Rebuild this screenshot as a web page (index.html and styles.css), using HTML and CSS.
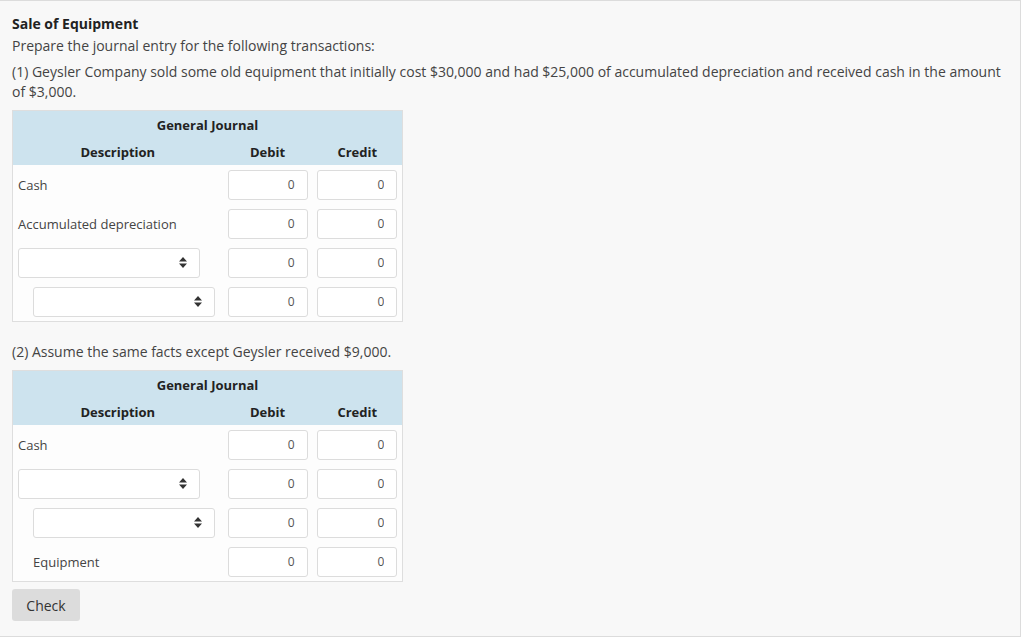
FILE: index.html
```html
<!DOCTYPE html>
<html>
<head>
<meta charset="utf-8">
<link rel="stylesheet" href="styles.css">
</head>
<body>
<div class="panel">
  <div class="title">Sale of Equipment</div>
  <div class="lead">Prepare the journal entry for the following transactions:</div>
  <p class="q">(1) Geysler Company sold some old equipment that initially cost $30,000 and had $25,000 of accumulated depreciation and received cash in the amount of $3,000.</p>
  <table class="gj">
    <colgroup><col class="c-desc"><col class="c-amt"><col class="c-amt"></colgroup>
    <thead>
      <tr><th colspan="3" class="cap">General Journal</th></tr>
      <tr><th>Description</th><th>Debit</th><th>Credit</th></tr>
    </thead>
    <tbody>
      <tr><td class="desc">Cash</td><td class="amt"><input class="num" value="0"></td><td class="amt"><input class="num" value="0"></td></tr>
      <tr><td class="desc">Accumulated depreciation</td><td class="amt"><input class="num" value="0"></td><td class="amt"><input class="num" value="0"></td></tr>
      <tr><td class="desc"><div class="sel"><svg width="8" height="11" viewBox="0 0 8 11"><path d="M4 0 L8 4.5 H0 Z M0 6.5 H8 L4 11 Z" fill="#333"/></svg></div></td><td class="amt"><input class="num" value="0"></td><td class="amt"><input class="num" value="0"></td></tr>
      <tr><td class="desc ind"><div class="sel"><svg width="8" height="11" viewBox="0 0 8 11"><path d="M4 0 L8 4.5 H0 Z M0 6.5 H8 L4 11 Z" fill="#333"/></svg></div></td><td class="amt"><input class="num" value="0"></td><td class="amt"><input class="num" value="0"></td></tr>
    </tbody>
  </table>
  <p class="q q2">(2) Assume the same facts except Geysler received $9,000.</p>
  <table class="gj">
    <colgroup><col class="c-desc"><col class="c-amt"><col class="c-amt"></colgroup>
    <thead>
      <tr><th colspan="3" class="cap">General Journal</th></tr>
      <tr><th>Description</th><th>Debit</th><th>Credit</th></tr>
    </thead>
    <tbody>
      <tr><td class="desc">Cash</td><td class="amt"><input class="num" value="0"></td><td class="amt"><input class="num" value="0"></td></tr>
      <tr><td class="desc"><div class="sel"><svg width="8" height="11" viewBox="0 0 8 11"><path d="M4 0 L8 4.5 H0 Z M0 6.5 H8 L4 11 Z" fill="#333"/></svg></div></td><td class="amt"><input class="num" value="0"></td><td class="amt"><input class="num" value="0"></td></tr>
      <tr><td class="desc ind"><div class="sel"><svg width="8" height="11" viewBox="0 0 8 11"><path d="M4 0 L8 4.5 H0 Z M0 6.5 H8 L4 11 Z" fill="#333"/></svg></div></td><td class="amt"><input class="num" value="0"></td><td class="amt"><input class="num" value="0"></td></tr>
      <tr><td class="desc ind">Equipment</td><td class="amt"><input class="num" value="0"></td><td class="amt"><input class="num" value="0"></td></tr>
    </tbody>
  </table>
  <button class="check">Check</button>
</div>
</body>
</html>
```
FILE: styles.css
```css
html, body {
  margin: 0;
  padding: 0;
  background: #ffffff;
}
body {
  font-family: "Open Sans", "Liberation Sans", sans-serif;
  color: #333;
}
.panel {
  box-sizing: border-box;
  width: 1021px;
  height: 637px;
  background: #f8f8f8;
  border-top: 1px solid #dcdcdc;
  border-right: 1px solid #dcdcdc;
  border-bottom: 1px solid #dcdcdc;
  padding: 13px 12px 0 12px;
}
.title {
  font-size: 14px;
  font-weight: 700;
  line-height: 20px;
  color: #222;
}
.lead {
  font-size: 14px;
  line-height: 20px;
  margin-top: 2px;
  color: #444;
}
.q {
  font-size: 14px;
  line-height: 20px;
  margin: 6px 0 8px 0;
  color: #444;
}
.q2 {
  margin-top: 20px;
  margin-bottom: 8px;
}
.gj {
  border-collapse: collapse;
  width: 390px;
  border: 1px solid #dedede;
  background: #fdfdfd;
  table-layout: fixed;
}
.c-desc { width: 210px; }
.c-amt { width: 90px; }
.gj th {
  background: #cde3ee;
  font-size: 13px;
  font-weight: 700;
  color: #222;
  height: 27px;
  padding: 0;
  line-height: 18px;
  vertical-align: middle;
}
.gj td {
  height: 39px;
  padding: 0;
}
.desc {
  padding-left: 5px !important;
  font-size: 13px;
  color: #444;
}
.desc.ind {
  padding-left: 20px !important;
}
.amt {
  text-align: center;
}
.num {
  box-sizing: border-box;
  width: 80px;
  height: 30px;
  border: 1px solid #dcdcdc;
  border-radius: 3px;
  background: #fff;
  text-align: right;
  padding: 0 12px 0 4px;
  font-family: "Open Sans", "Liberation Sans", sans-serif;
  font-size: 12px;
  color: #555;
  display: block;
  margin: 0 auto;
}
.sel {
  box-sizing: border-box;
  width: 182px;
  height: 30px;
  border: 1px solid #dcdcdc;
  border-radius: 3px;
  background: #fff;
  display: flex;
  align-items: center;
  justify-content: flex-end;
  padding-right: 12px;
}
.check {
  margin-top: 7px;
  width: 68px;
  height: 32px;
  border: none;
  border-radius: 3px;
  background: #dcdcdc;
  font-family: "Open Sans", "Liberation Sans", sans-serif;
  font-size: 14px;
  color: #333;
  padding: 0;
}
```
